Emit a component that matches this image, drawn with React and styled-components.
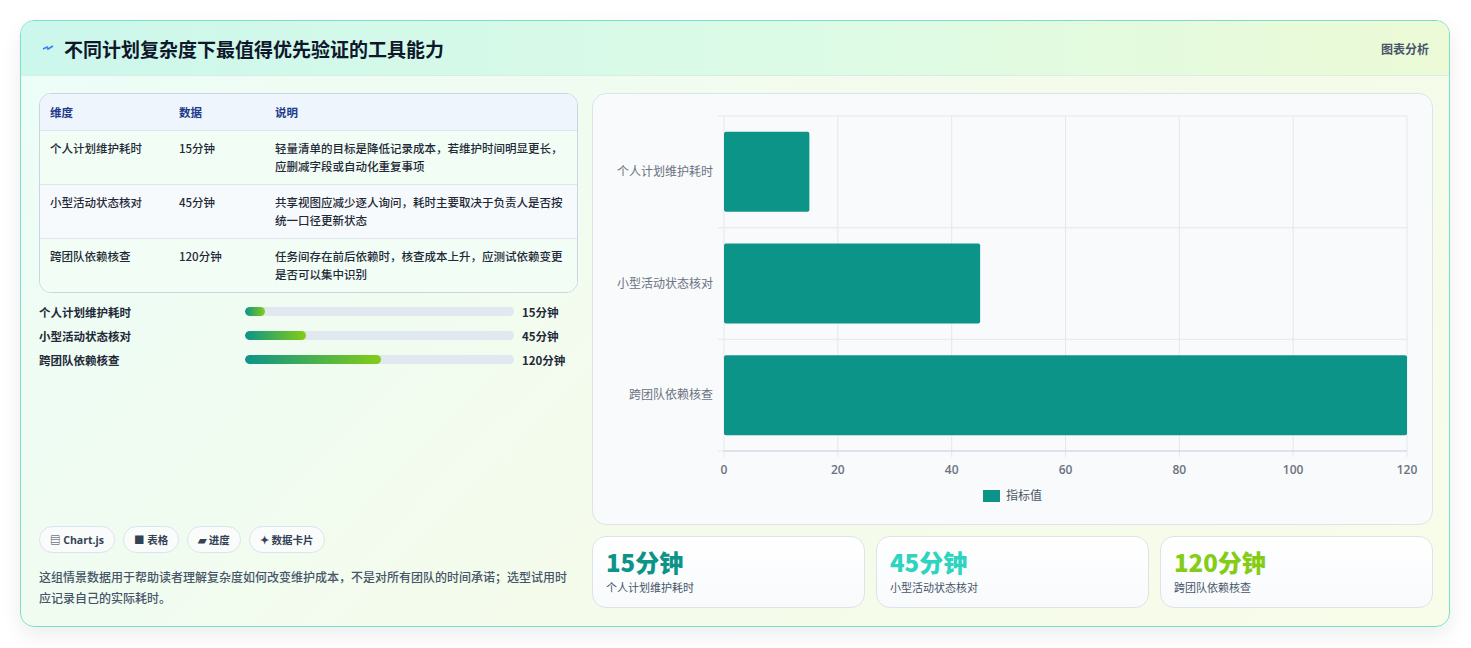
import styled, { createGlobalStyle } from "styled-components";

const Global = createGlobalStyle`
  body {
    margin: 0;
    background: #ffffff;
    font-family: "Noto Sans CJK SC", "Noto Sans", sans-serif;
  }
`;

const rows = [
  { name: "个人计划维护耗时", value: "15分钟", num: 15, pct: 7.5, color: "#0d9488", note: "轻量清单的目标是降低记录成本，若维护时间明显更长，应删减字段或自动化重复事项" },
  { name: "小型活动状态核对", value: "45分钟", num: 45, pct: 22.6, color: "#2dd4bf", note: "共享视图应减少逐人询问，耗时主要取决于负责人是否按统一口径更新状态" },
  { name: "跨团队依赖核查", value: "120分钟", num: 120, pct: 50.5, color: "#84cc16", note: "任务间存在前后依赖时，核查成本上升，应测试依赖变更是否可以集中识别" },
];

const Page = styled.div`
  padding: 20px 21px 20px 20px;
`;

const Card = styled.div`
  border: 1px solid #7ddfc9;
  border-radius: 14px;
  background: linear-gradient(135deg, #ecfdf8 0%, #f5fbea 60%, #f7fde9 100%);
  box-shadow: 0 8px 20px rgba(15, 23, 42, 0.08);
  overflow: hidden;
`;

const Header = styled.div`
  height: 54px;
  display: flex;
  align-items: center;
  justify-content: space-between;
  padding: 0 20px 0 20px;
  background: linear-gradient(90deg, #ccf7ec 0%, #dcfbe6 55%, #ecfad6 100%);
  border-bottom: 1px solid #d5efe6;
`;

const Title = styled.h2`
  margin: 0;
  font-size: 19px;
  font-weight: 700;
  color: #0f172a;
  display: flex;
  align-items: center;
  gap: 9px;
`;

const Tag = styled.span`
  font-size: 12px;
  font-weight: 700;
  color: #475569;
`;

const Body = styled.div`
  display: grid;
  grid-template-columns: 539px 841px;
  gap: 14px;
  padding: 17px 18px 18px 18px;
`;

const Left = styled.div`
  display: flex;
  flex-direction: column;
`;

const Table = styled.div`
  border: 1px solid #cbd5e1;
  border-radius: 12px;
  overflow: hidden;
  background: #f6fdf8;
`;

const Row = styled.div`
  display: grid;
  grid-template-columns: 129px 96px 1fr;
  padding: ${(p) => (p.$head ? "9px 10px" : "8px 10px 9px 10px")};
  min-height: ${(p) => (p.$head ? "15px" : "36px")};
  background: ${(p) => (p.$head ? "#eef5fd" : p.$alt ? "#f7fafc" : "#f1fdf5")};
  border-top: ${(p) => (p.$first ? "none" : "1px solid #dde5ee")};
  font-size: 11.5px;
  line-height: 18px;
  font-weight: ${(p) => (p.$head ? 700 : 500)};
  color: ${(p) => (p.$head ? "#1e3a8a" : "#1f2937")};
`;

const Cell = styled.div`
  font-weight: ${(p) => (p.$bold ? 700 : "inherit")};
`;

const Bars = styled.div`
  display: flex;
  flex-direction: column;
  gap: 7px;
  margin-top: 10px;
`;

const BarRow = styled.div`
  display: grid;
  grid-template-columns: 198px 269px auto;
  gap: 8px;
  align-items: center;
  font-size: 11.5px;
  font-weight: 700;
  color: #1f2937;
  height: 17px;
`;

const Track = styled.div`
  height: 9px;
  border-radius: 5px;
  background: #e2e8f0;
  overflow: hidden;
`;

const Fill = styled.div`
  height: 100%;
  border-radius: 5px;
  background: linear-gradient(90deg, #0d9488, #84cc16);
`;

const Footer = styled.div`
  margin-top: auto;
`;

const Chips = styled.div`
  display: flex;
  gap: 8px;
  margin-bottom: 13px;
`;

const Chip = styled.span`
  padding: 5px 10px;
  border: 1px solid #dbe4ea;
  border-radius: 14px;
  background: #fafcfb;
  font-size: 10.5px;
  font-weight: 700;
  color: #334155;
  font-family: "Open Sans", "Noto Sans CJK SC", sans-serif;
`;

const Note = styled.p`
  margin: 0;
  font-size: 12px;
  line-height: 21px;
  color: #475569;
  font-weight: 500;
`;

const Right = styled.div`
  display: flex;
  flex-direction: column;
  gap: 11px;
`;

const ChartPanel = styled.div`
  height: 430px;
  border: 1px solid #dbe4ea;
  border-radius: 14px;
  background: #f8fafc;
`;

const Stats = styled.div`
  display: grid;
  grid-template-columns: repeat(3, 1fr);
  gap: 11px;
`;

const Stat = styled.div`
  height: 72px;
  box-sizing: border-box;
  padding: 10px 13px;
  border: 1px solid #dbe4ea;
  border-radius: 14px;
  background: linear-gradient(180deg, #ffffff, #f8fafc);
`;

const StatValue = styled.div`
  font-size: 24px;
  line-height: 30px;
  font-weight: 800;
  color: ${(p) => p.$color};
`;

const StatLabel = styled.div`
  font-size: 11px;
  color: #475569;
  margin-top: 2px;
`;

const Chart = () => {
  const x0 = 131, x1 = 814, y0 = 22, y1 = 357;
  const band = (y1 - y0) / 3;
  const sx = (v) => x0 + ((x1 - x0) * v) / 120;
  const font = "Open Sans, Noto Sans CJK SC, sans-serif";
  return (
    <svg width="841" height="430" viewBox="0 0 841 430">
      {[0, 20, 40, 60, 80, 100, 120].map((t) => (
        <g key={t}>
          <line x1={sx(t)} x2={sx(t)} y1={y0} y2={y1 + 6} stroke="#e5e7eb" />
          <text x={sx(t)} y={y1 + 23} textAnchor="middle" fontSize="12" fill="#6b7280" fontFamily={font} fontWeight="600">{t}</text>
        </g>
      ))}
      {[0, 1, 2, 3].map((i) => (
        <line key={i} x1={x0 - 6} x2={x1} y1={y0 + band * i} y2={y0 + band * i} stroke="#e5e7eb" />
      ))}
      <line x1={x0} x2={x1} y1={y1} y2={y1} stroke="#cbd5e1" />
      {rows.map((r, i) => {
        const cy = y0 + band * i + band / 2;
        return (
          <g key={r.name}>
            <rect x={x0} y={cy - 40} width={sx(r.num) - x0} height={80} rx="2" fill="#0d9488" />
            <text x={x0 - 11} y={cy + 4} textAnchor="end" fontSize="12" fill="#6b7280" fontFamily={font}>{r.name}</text>
          </g>
        );
      })}
      <rect x="390" y="396" width="17" height="12" fill="#0d9488" />
      <text x="413" y="406" fontSize="12" fill="#4b5563" fontFamily={font}>指标值</text>
    </svg>
  );
};

const Bolt = () => (
  <svg width="14" height="14" viewBox="0 0 14 14">
    <path d="M2 8 L6 6 L7 8 L12 5" stroke="#3b82f6" strokeWidth="1.6" fill="none" />
  </svg>
);

export default function App() {
  return (
    <Page>
      <Global />
      <Card>
        <Header>
          <Title><Bolt />不同计划复杂度下最值得优先验证的工具能力</Title>
          <Tag>图表分析</Tag>
        </Header>
        <Body>
          <Left>
            <Table>
              <Row $head $first>
                <Cell>维度</Cell><Cell>数据</Cell><Cell>说明</Cell>
              </Row>
              {rows.map((r, i) => (
                <Row key={r.name} $alt={i === 1}>
                  <Cell>{r.name}</Cell>
                  <Cell>{r.value}</Cell>
                  <Cell>{r.note}</Cell>
                </Row>
              ))}
            </Table>
            <Bars>
              {rows.map((r) => (
                <BarRow key={r.name}>
                  <span>{r.name}</span>
                  <Track><Fill style={{ width: `${r.pct}%` }} /></Track>
                  <span>{r.value}</span>
                </BarRow>
              ))}
            </Bars>
            <Footer>
              <Chips>
                <Chip>▤ Chart.js</Chip>
                <Chip>■ 表格</Chip>
                <Chip>▰ 进度</Chip>
                <Chip>✦ 数据卡片</Chip>
              </Chips>
              <Note>这组情景数据用于帮助读者理解复杂度如何改变维护成本，不是对所有团队的时间承诺；选型试用时应记录自己的实际耗时。</Note>
            </Footer>
          </Left>
          <Right>
            <ChartPanel><Chart /></ChartPanel>
            <Stats>
              {rows.map((r) => (
                <Stat key={r.name}>
                  <StatValue $color={r.color}>{r.value}</StatValue>
                  <StatLabel>{r.name}</StatLabel>
                </Stat>
              ))}
            </Stats>
          </Right>
        </Body>
      </Card>
    </Page>
  );
}
